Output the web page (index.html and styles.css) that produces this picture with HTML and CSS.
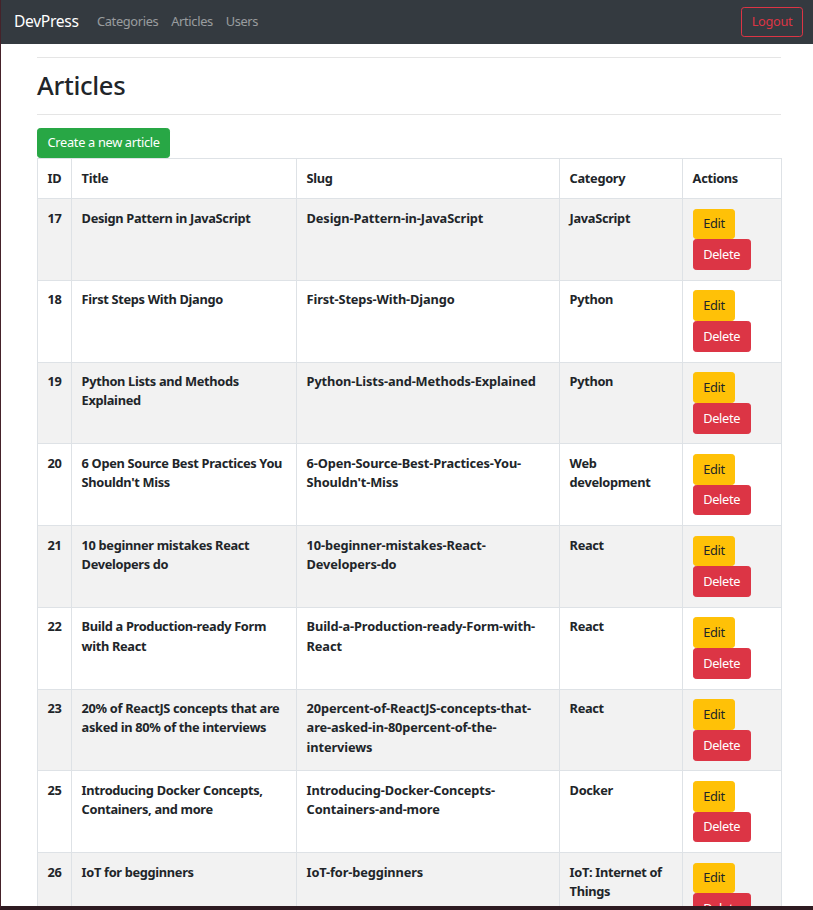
FILE: index.html
```html
<!DOCTYPE html>
<html lang="en">
<head>
<meta charset="utf-8">
<title>DevPress - Articles</title>
<link rel="stylesheet" href="styles.css">
</head>
<body>
<nav class="navbar">
  <div class="nav-left">
    <a class="brand" href="#">DevPress</a>
    <ul class="nav-links">
      <li><a href="#">Categories</a></li>
      <li><a href="#">Articles</a></li>
      <li><a href="#">Users</a></li>
    </ul>
  </div>
  <button class="btn btn-outline-danger">Logout</button>
</nav>
<main class="container">
  <hr class="rule">
  <h2 class="page-title">Articles</h2>
  <hr class="rule">
  <button class="btn btn-success">Create a new article</button>
  <table class="table">
    <thead>
      <tr><th class="c-id">ID</th><th class="c-title">Title</th><th class="c-slug">Slug</th><th class="c-cat">Category</th><th class="c-act">Actions</th></tr>
    </thead>
    <tbody>
      <tr><td>17</td><td>Design Pattern in JavaScript</td><td>Design-Pattern-in-JavaScript</td><td>JavaScript</td><td class="actions"><button class="btn btn-warning">Edit</button><button class="btn btn-danger">Delete</button></td></tr>
      <tr><td>18</td><td>First Steps With Django</td><td>First-Steps-With-Django</td><td>Python</td><td class="actions"><button class="btn btn-warning">Edit</button><button class="btn btn-danger">Delete</button></td></tr>
      <tr><td>19</td><td>Python Lists and Methods Explained</td><td>Python-Lists-and-Methods-Explained</td><td>Python</td><td class="actions"><button class="btn btn-warning">Edit</button><button class="btn btn-danger">Delete</button></td></tr>
      <tr><td>20</td><td>6 Open Source Best Practices You Shouldn't Miss</td><td>6-Open-Source-Best-Practices-You-Shouldn't-Miss</td><td>Web development</td><td class="actions"><button class="btn btn-warning">Edit</button><button class="btn btn-danger">Delete</button></td></tr>
      <tr><td>21</td><td>10 beginner mistakes React Developers do</td><td>10-beginner-mistakes-React-Developers-do</td><td>React</td><td class="actions"><button class="btn btn-warning">Edit</button><button class="btn btn-danger">Delete</button></td></tr>
      <tr><td>22</td><td>Build a Production-ready Form with React</td><td>Build-a-Production-ready-Form-with-React</td><td>React</td><td class="actions"><button class="btn btn-warning">Edit</button><button class="btn btn-danger">Delete</button></td></tr>
      <tr><td>23</td><td>20% of ReactJS concepts that are asked in 80% of the interviews</td><td>20percent-of-ReactJS-concepts-that-are-asked-in-80percent-of-the-interviews</td><td>React</td><td class="actions"><button class="btn btn-warning">Edit</button><button class="btn btn-danger">Delete</button></td></tr>
      <tr><td>25</td><td>Introducing Docker Concepts, Containers, and more</td><td>Introducing-Docker-Concepts-Containers-and-more</td><td>Docker</td><td class="actions"><button class="btn btn-warning">Edit</button><button class="btn btn-danger">Delete</button></td></tr>
      <tr><td>26</td><td>IoT for begginners</td><td>IoT-for-begginners</td><td>IoT: Internet of Things</td><td class="actions"><button class="btn btn-warning">Edit</button><button class="btn btn-danger">Delete</button></td></tr>
    </tbody>
  </table>
</main>
<div class="window-frame"></div>
</body>
</html>
```

FILE: styles.css
```css
html {
  font-size: 12.8px;
}
body {
  margin: 0;
  font-family: "Noto Sans", "Open Sans", sans-serif;
  font-size: 1rem;
  line-height: 1.5;
  letter-spacing: -0.025em;
  color: #212529;
  background: #fff;
}
.window-frame {
  position: fixed;
  inset: 0;
  border-left: 1px solid #45222a;
  border-bottom: 4px solid #2e1b21;
  pointer-events: none;
}
.navbar {
  background: #343a40;
  display: flex;
  align-items: center;
  justify-content: space-between;
  height: 44px;
  box-sizing: border-box;
  padding: 0 10px 0 14px;
}
.nav-left {
  display: flex;
  align-items: center;
}
.brand {
  color: #fff;
  text-decoration: none;
  font-size: 1.22rem;
  margin-right: 12px;
}
.nav-links {
  display: flex;
  list-style: none;
  margin: 0;
  padding: 0;
}
.nav-links a {
  color: rgba(255, 255, 255, 0.5);
  text-decoration: none;
  padding: 0 6.4px;
}
.btn {
  font-family: inherit;
  font-size: 1rem;
  line-height: 1.5;
  letter-spacing: inherit;
  padding: 4.8px 9.6px;
  border: 1px solid transparent;
  border-radius: 3.2px;
  cursor: pointer;
  display: inline-block;
}
.btn-outline-danger {
  background: transparent;
  color: #dc3545;
  border-color: #dc3545;
}
.btn-success {
  background: #28a745;
  border-color: #28a745;
  color: #fff;
  padding-top: 4.4px;
  padding-bottom: 4.4px;
}
.btn-warning {
  background: #ffc107;
  border-color: #ffc107;
  color: #212529;
}
.btn-danger {
  background: #dc3545;
  border-color: #dc3545;
  color: #fff;
}
.container {
  width: 744px;
  margin: 0 0 0 37px;
}
.rule {
  border: 0;
  border-top: 1px solid rgba(0, 0, 0, 0.1);
  margin: 12.8px 0;
}
.page-title {
  font-size: 2rem;
  font-weight: 500;
  line-height: 1.2;
  margin: 0 0 6.4px;
}
.table {
  width: 100%;
  border-collapse: collapse;
  table-layout: fixed;
}
.table th,
.table td {
  box-sizing: border-box;
  border: 1px solid #dee2e6;
  padding: 9.6px;
  text-align: left;
  vertical-align: top;
  font-weight: 700;
}
.table thead th {
  padding-top: 10.4px;
}
.table td:nth-child(3) {
  letter-spacing: -0.01em;
}
.table tbody tr:nth-child(odd) {
  background: #f2f2f2;
}
.c-id { width: 34px; }
.c-title { width: 225px; }
.c-slug { width: 263px; }
.c-cat { width: 123px; }
.c-act { width: 99px; }
.actions .btn {
  display: block;
}
```
